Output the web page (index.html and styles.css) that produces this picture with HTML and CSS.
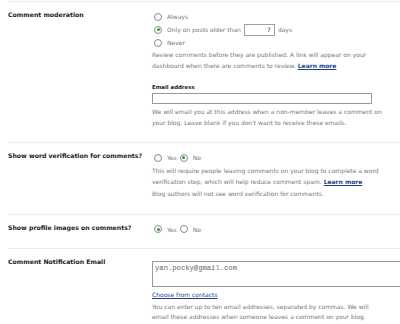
FILE: index.html
```html
<!DOCTYPE html>
<html>
  <head>
    <title>Comment Settings</title>
    <link rel="stylesheet" href="styles.css">
  </head>
  <body>
    <div class="settings">
      <div class="row">
        <div class="label">Comment moderation</div>
        <div class="field">
          <div class="radio-list">
            <label class="option"><span class="radio"></span> Always</label>
            <label class="option"><span class="radio is-checked"></span> Only on posts older than <input class="days-input" value="7"> days</label>
            <label class="option"><span class="radio"></span> Never</label>
          </div>
          <p class="help first-help">Review comments before they are published. A link will appear on your dashboard when there are comments to review. <a href="#" class="learn-more">Learn more</a></p>
          <div class="sub-label">Email address</div>
          <input class="email-input">
          <p class="help email-help">We will email you at this address when a non-member leaves a comment on your blog. Leave blank if you don't want to receive these emails.</p>
        </div>
      </div>

      <div class="row">
        <div class="label">Show word verification for comments?</div>
        <div class="field">
          <div class="radio-inline">
            <label class="option"><span class="radio"></span> Yes</label>
            <label class="option"><span class="radio is-checked"></span> No</label>
          </div>
          <p class="help">This will require people leaving comments on your blog to complete a word verification step, which will help reduce comment spam. <a href="#" class="learn-more">Learn more</a></p>
          <p class="help">Blog authors will not see word verification for comments.</p>
        </div>
      </div>

      <div class="row short-row">
        <div class="label">Show profile images on comments?</div>
        <div class="field">
          <div class="radio-inline">
            <label class="option"><span class="radio is-checked"></span> Yes</label>
            <label class="option"><span class="radio"></span> No</label>
          </div>
        </div>
      </div>

      <div class="row">
        <div class="label">Comment Notification Email</div>
        <div class="field">
          <textarea class="notify-input">yan.pocky@gmail.com</textarea>
          <a href="#" class="contacts-link">Choose from contacts</a>
          <p class="help">You can enter up to ten email addresses, separated by commas. We will email these addresses when someone leaves a comment on your blog.</p>
        </div>
      </div>
    </div>
  </body>
</html>
```

FILE: styles.css
```css
body {
  margin: 1px 0 0 8px;
  font-family: "DejaVu Sans", Verdana, sans-serif;
  font-size: 6px;
  color: #777;
  background-color: white;
  overflow: hidden;
}
.row {
  display: grid;
  grid-template-columns: 144px 1fr;
  border-top: 1px solid #ececec;
  padding-top: 7px;
  padding-bottom: 14px;
}
.short-row {
  padding-bottom: 12px;
}
.label {
  font-weight: bold;
  font-size: 6.2px;
  color: #222;
  line-height: 11px;
}
.field {
  width: 232px;
}
.radio-list {
  margin-top: 1px;
}
.option {
  display: flex;
  align-items: center;
  height: 13px;
  line-height: 13px;
}
.radio-inline {
  display: flex;
  gap: 1px;
  margin-top: 1px;
}
.radio {
  display: inline-block;
  width: 6px;
  height: 6px;
  border: 1px solid #8a8a8a;
  border-radius: 50%;
  background-color: white;
  margin-left: 2px;
  margin-right: 5px;
  position: relative;
}
.is-checked::after {
  content: "";
  position: absolute;
  left: 1.5px;
  top: 1.5px;
  width: 3px;
  height: 3px;
  border-radius: 50%;
  background-color: #2e9b2e;
}
.days-input {
  width: 31px;
  height: 12px;
  box-sizing: border-box;
  margin: 0 3px 0 3px;
  padding: 0 3px 0 0;
  border: 1px solid #a0a0a0;
  font-family: "DejaVu Sans", sans-serif;
  font-size: 6px;
  color: #444;
  text-align: right;
}
.help {
  margin: 0;
  margin-top: 2px;
  line-height: 10.5px;
}
.first-help {
  margin-top: 1px;
}
.email-help {
  margin-top: 3px;
}
.learn-more {
  color: #1d3f88;
  font-weight: bold;
}
.sub-label {
  font-weight: bold;
  color: #222;
  font-size: 5.4px;
  margin-top: 12px;
  line-height: 9px;
}
.email-input {
  display: block;
  width: 220px;
  height: 11px;
  box-sizing: border-box;
  border: 1px solid #999;
  margin: 1px 0 0 0;
  padding: 0;
}
.notify-input {
  display: block;
  width: 262px;
  height: 26px;
  box-sizing: border-box;
  margin: 5px 0 0 0;
  padding: 2px 2px;
  border: 1px solid #999;
  border-right: none;
  font-family: "Liberation Mono", monospace;
  font-size: 7.2px;
  color: #666;
  resize: none;
}
.contacts-link {
  display: block;
  color: #1d3f88;
  margin-top: 3px;
  font-size: 6px;
  line-height: 10px;
}
```
